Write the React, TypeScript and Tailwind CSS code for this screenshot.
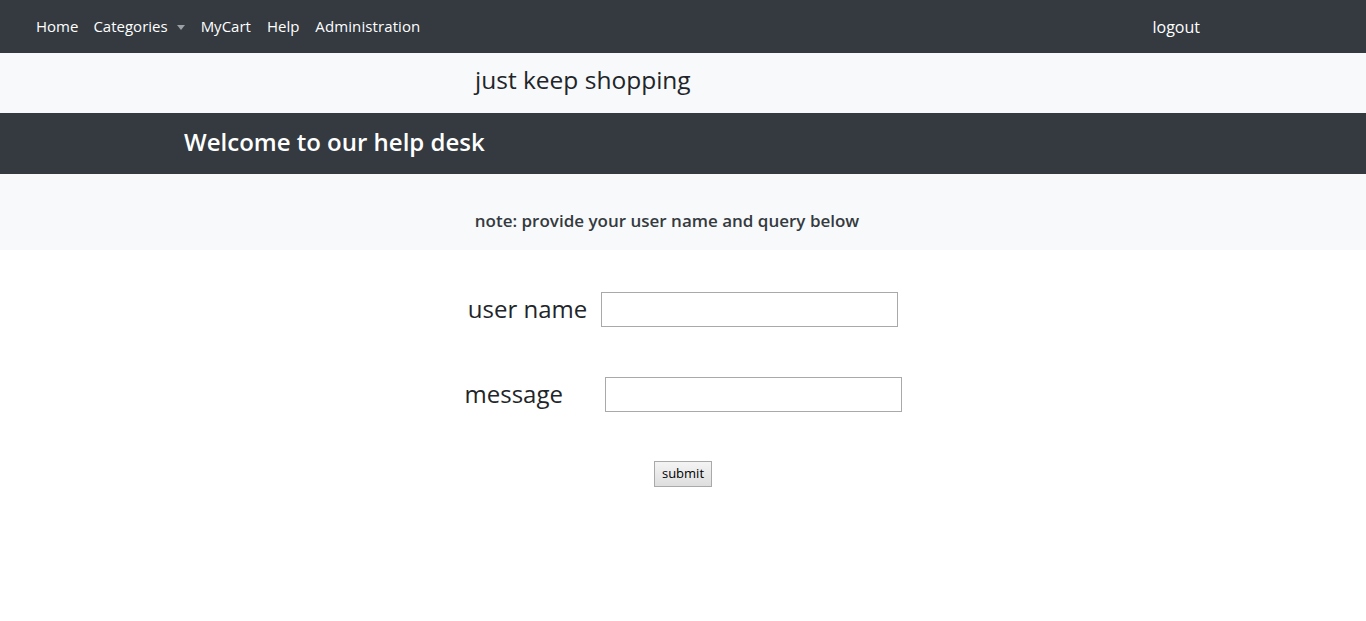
import React from 'react';

const font = { fontFamily: '"Open Sans", "Noto Sans", Arial, sans-serif' };

function NavBar() {
  return (
    <nav className="flex h-[53px] items-center bg-[#343a40] pl-[36px] text-[15px] text-white">
      <ul className="flex items-center gap-[16px]">
        <li>Home</li>
        <li className="-ml-[1px] flex items-center gap-[9px]">
          Categories
          <span className="mt-[2px] h-0 w-0 border-x-[4px] border-t-[5px] border-x-transparent border-t-[#9aa0a6]" />
        </li>
        <li>MyCart</li>
        <li>Help</li>
        <li className="tracking-[0.1px]">Administration</li>
      </ul>
      <div className="ml-auto mr-[166px] text-[16px]">logout</div>
    </nav>
  );
}

function HelpForm() {
  return (
    <form className="flex flex-col items-center pt-[41px]" onSubmit={(e) => e.preventDefault()}>
      <div className="flex items-center">
        <label className="text-[24px] text-[#212529]">user name</label>
        <input className="ml-[14px] h-[35px] w-[297px] border border-[#a9a9a9] bg-white" />
      </div>
      <div className="mt-[49px] flex items-center">
        <label className="w-[140px] text-[24px] text-[#212529]">message</label>
        <input className="h-[35px] w-[297px] border border-[#a9a9a9] bg-white" />
      </div>
      <button
        type="submit"
        className="mt-[49px] h-[26px] border border-[#a9a9a9] bg-gradient-to-b from-[#f4f4f4] to-[#dedede] px-[7px] text-[13px] text-black"
      >
        submit
      </button>
    </form>
  );
}

export default function App() {
  return (
    <div className="min-h-screen bg-white" style={font}>
      <NavBar />
      <div className="flex h-[60px] items-center bg-[#f8f9fa] pb-[6px] pl-[475px] text-[24.5px] text-[#212529]">
        just keep shopping
      </div>
      <div className="flex h-[61px] items-center bg-[#343a40] pb-[4px] pl-[184px] text-[24px] font-semibold text-white">
        Welcome to our help desk
      </div>
      <div className="flex h-[76px] items-center justify-center bg-[#f8f9fa] pr-[32px] pt-[18px] text-[17px] font-semibold text-[#343a40]">
        note: provide your user name and query below
      </div>
      <HelpForm />
    </div>
  );
}
